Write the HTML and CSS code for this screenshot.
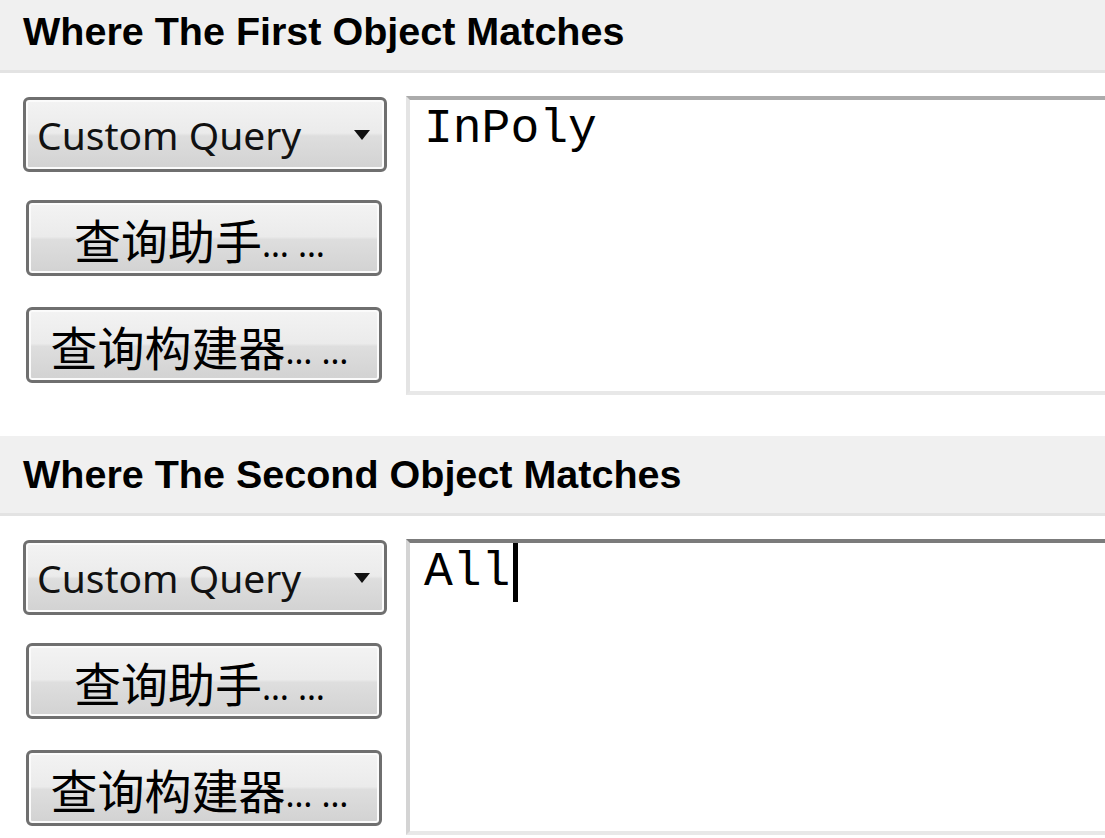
FILE: index.html
```html
<!DOCTYPE html>
<html lang="zh">
<head>
<meta charset="utf-8">
<title>Query</title>
<link rel="stylesheet" href="styles.css">
</head>
<body>
<div class="page">
  <section class="group">
    <div class="group-head">Where The First Object Matches</div>
    <div class="group-body">
      <div class="controls">
        <div class="combo">
          <span class="combo-label">Custom Query</span>
          <svg class="combo-arrow" width="16" height="10" viewBox="0 0 16 10"><polygon points="0,0 16,0 8,10" fill="#111"/></svg>
        </div>
        <button class="btn">查询助手<span class="dots">……</span></button>
        <button class="btn btn-last">查询构建器<span class="dots">……</span></button>
      </div>
      <div class="editor">InPoly</div>
    </div>
  </section>
  <section class="group">
    <div class="group-head">Where The Second Object Matches</div>
    <div class="group-body">
      <div class="controls">
        <div class="combo">
          <span class="combo-label">Custom Query</span>
          <svg class="combo-arrow" width="16" height="10" viewBox="0 0 16 10"><polygon points="0,0 16,0 8,10" fill="#111"/></svg>
        </div>
        <button class="btn">查询助手<span class="dots">……</span></button>
        <button class="btn btn-last">查询构建器<span class="dots">……</span></button>
      </div>
      <div class="editor editor-focused">All<span class="caret"></span></div>
    </div>
  </section>
</div>
</body>
</html>
```
FILE: styles.css
```css
html, body {
  margin: 0;
  padding: 0;
  background: #ffffff;
  overflow: hidden;
}

.page {
  margin-top: -7px;
}

.group-head {
  height: 77px;
  background: #f0f0f0;
  border-bottom: 3px solid #e3e3e3;
  display: flex;
  align-items: center;
  padding-left: 23px;
  font-family: "Liberation Sans", Arial, sans-serif;
  font-weight: bold;
  font-size: 39.5px;
  color: #000;
  white-space: nowrap;
}

.group-body {
  display: flex;
  gap: 19px;
  padding: 23px 0 41px 23px;
}

.controls {
  display: flex;
  flex-direction: column;
  width: 364px;
  flex: none;
  padding-top: 1px;
}

.combo {
  box-sizing: border-box;
  height: 75px;
  width: 364px;
  border: 3px solid #6f6f6f;
  border-radius: 6px;
  box-shadow: inset 0 0 0 2px #fbfbfb;
  background: linear-gradient(#f3f3f3 0%, #ebebeb 48%, #dedede 52%, #d2d2d2 100%);
  display: flex;
  align-items: center;
  justify-content: space-between;
  padding: 0 14px 0 11px;
  font-family: "Noto Sans", "Liberation Sans", sans-serif;
  font-size: 39px;
  color: #111;
}

.combo-arrow {
  display: block;
}

.btn {
  box-sizing: border-box;
  margin: 28px 0 0 3px;
  width: 356px;
  height: 76px;
  border: 3px solid #6f6f6f;
  border-radius: 6px;
  box-shadow: inset 0 0 0 2px #fbfbfb;
  background: linear-gradient(#f3f3f3 0%, #ebebeb 48%, #dedede 52%, #d2d2d2 100%);
  display: flex;
  align-items: center;
  justify-content: center;
  padding: 0;
  font-family: "Noto Sans", "Noto Sans CJK SC", sans-serif;
  font-size: 47px;
  color: #000;
  white-space: nowrap;
}

.dots {
  font-size: 34px;
  letter-spacing: 9px;
  align-self: center;
  padding-top: 12px;
}

.btn-last {
  margin-top: 31px;
}

.editor {
  flex: 1;
  box-sizing: border-box;
  height: 299px;
  border-top: 4px solid #ababab;
  border-left: 4px solid #e4e4e4;
  border-bottom: 4px solid #e8e8e8;
  padding: 5px 0 0 14px;
  font-family: "Liberation Mono", "Courier New", monospace;
  font-size: 48px;
  line-height: 48px;
  color: #000;
  white-space: pre;
}

.editor-focused {
  height: 296px;
  border-top-color: #7b7b7b;
  border-left-color: #d4d4d4;
}

.caret {
  display: inline-block;
  width: 5px;
  height: 59px;
  margin-left: 3px;
  margin-top: -5px;
  background: #000;
  vertical-align: top;
}
```
